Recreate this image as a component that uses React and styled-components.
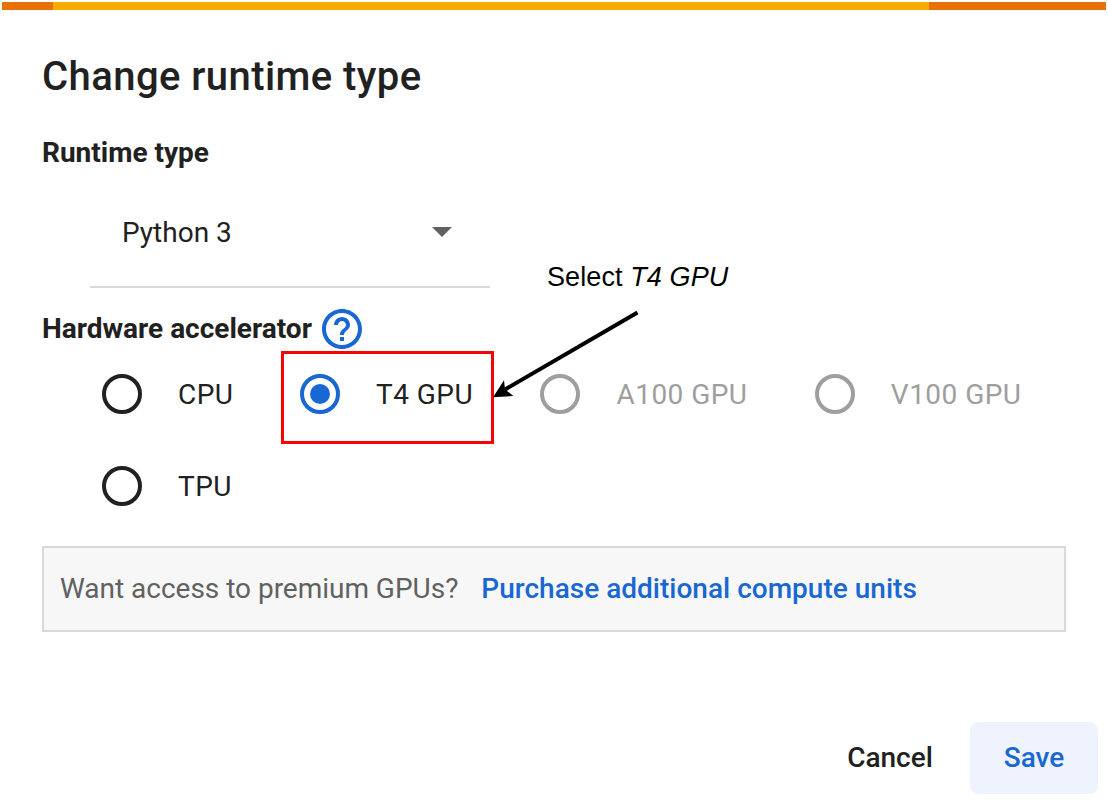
import React from "react";
import styled, { createGlobalStyle } from "styled-components";

const blue = "#1967d2";
const ink = "#212121";

const GlobalStyle = createGlobalStyle`
  * { box-sizing: border-box; }
  body { margin: 0; background: #fff; font-family: Roboto, sans-serif; color: ${ink}; }
`;

const Dialog = styled.main`
  position: relative;
  width: 1108px;
  height: 808px;
  padding: 2px 2px 0;
  display: flex;
  flex-direction: column;
  overflow: hidden;
`;

const ProgressBar = styled.div`
  height: 8px;
  flex: none;
  display: grid;
  grid-template-columns: 51px 875.5px 1fr;
  background: #e8710a;
`;

const ProgressFill = styled.div`
  grid-column: 2;
  background: #f9ab00;
`;

const Body = styled.div`
  padding: 43px 40px 0;
`;

const Title = styled.h1`
  margin: 0;
  font-size: 40px;
  line-height: 48px;
  font-weight: 500;
  letter-spacing: 0.43px;
`;

const FieldLabel = styled.h2`
  margin: 0;
  display: flex;
  align-items: center;
  gap: 10px;
  height: 40px;
  font-size: 28px;
  line-height: 40px;
  font-weight: 700;
`;

const RuntimeField = styled.section`
  margin-top: 32px;
`;

const Select = styled.div`
  margin: 5px 0 0 48px;
  width: 400px;
  height: 110px;
  padding: 0 38px 0 32px;
  border-bottom: 2px solid #dadada;
  display: flex;
  align-items: center;
  justify-content: space-between;
  font-size: 28px;
`;

const Accelerator = styled.section`
  margin-top: 21px;
`;

const Options = styled.div`
  display: flex;
  flex-wrap: wrap;
  column-gap: 67.4px;
  margin-left: 60px;
  margin-top: -1px;
`;

const Option = styled.div`
  position: relative;
  display: flex;
  align-items: center;
  gap: 36px;
  height: 92px;
  font-size: 28px;
  letter-spacing: 0.46px;
  color: ${(p) => (p.$disabled ? "#9e9e9e" : ink)};

  &:first-child {
    margin-right: -0.8px;
  }
`;

const Radio = styled.span`
  width: 40px;
  height: 40px;
  border-radius: 50%;
  border: 4px solid ${(p) => (p.$checked ? blue : "currentColor")};
  display: grid;
  place-items: center;
  &::after {
    content: "";
    width: 20px;
    height: 20px;
    border-radius: 50%;
    background: ${(p) => (p.$checked ? blue : "transparent")};
  }
`;

const Highlight = styled.span`
  position: absolute;
  left: -19px;
  top: 3px;
  width: 213px;
  height: 93px;
  border: 3px solid #f50505;
`;

const Banner = styled.section`
  margin-top: 14px;
  height: 86px;
  width: 1024px;
  border: 2px solid #d9d9d9;
  background: #f7f7f7;
  padding: 0 16px 2px;
  display: flex;
  align-items: center;
  gap: 23px;
  font-size: 28px;
  letter-spacing: -0.02px;
  color: #616161;
`;

const PurchaseLink = styled.a`
  color: ${blue};
  font-weight: 500;
  letter-spacing: 0.01px;
`;

const Actions = styled.footer`
  margin-top: 90px;
  padding-right: 8px;
  display: flex;
  justify-content: flex-end;
`;

const Button = styled.button`
  width: ${(p) => (p.$primary ? 128 : 160)}px;
  height: 72px;
  padding: 0;
  border: 0;
  border-radius: 8px;
  font: 500 28px/72px Roboto, sans-serif;
  color: ${(p) => (p.$primary ? blue : ink)};
  background: ${(p) => (p.$primary ? "#eef3fd" : "transparent")};
`;

const Note = styled.div`
  position: absolute;
  left: 547px;
  top: 261px;
  font: 27px/32px "Liberation Sans", sans-serif;
  letter-spacing: 0.1px;
  color: #000;
  white-space: nowrap;
`;

const Arrow = styled.svg`
  position: absolute;
  left: 490px;
  top: 305px;
`;

const accelerators = [
  { name: "CPU" },
  { name: "T4 GPU", checked: true },
  { name: "A100 GPU", disabled: true },
  { name: "V100 GPU", disabled: true },
  { name: "TPU" },
];

const HelpIcon = () => (
  <svg width="40" height="40" viewBox="2 2 20 20" fill={blue}>
    <path d="M11 18h2v-2h-2v2zm1-16C6.48 2 2 6.48 2 12s4.48 10 10 10 10-4.48 10-10S17.52 2 12 2zm0 18c-4.41 0-8-3.59-8-8s3.59-8 8-8 8 3.59 8 8-3.59 8-8 8zm0-14c-2.21 0-4 1.79-4 4h2c0-1.1.9-2 2-2s2 .9 2 2c0 2-3 1.75-3 5h2c0-2.25 3-2.5 3-5 0-2.21-1.79-4-4-4z" />
  </svg>
);

export default function App() {
  return (
    <>
      <GlobalStyle />
      <Dialog>
        <ProgressBar>
          <ProgressFill />
        </ProgressBar>
        <Body>
          <Title>Change runtime type</Title>
          <RuntimeField>
            <FieldLabel>Runtime type</FieldLabel>
            <Select>
              Python 3
              <svg width="20" height="10" viewBox="0 0 20 10" fill="#616161">
                <path d="M0 0h20L10 10z" />
              </svg>
            </Select>
          </RuntimeField>
          <Accelerator>
            <FieldLabel>
              Hardware accelerator
              <HelpIcon />
            </FieldLabel>
            <Options>
              {accelerators.map((a) => (
                <Option key={a.name} $disabled={a.disabled}>
                  <Radio $checked={a.checked} />
                  <span>{a.name}</span>
                  {a.checked && <Highlight />}
                </Option>
              ))}
            </Options>
          </Accelerator>
          <Banner>
            <span>Want access to premium GPUs?</span>
            <PurchaseLink>Purchase additional compute units</PurchaseLink>
          </Banner>
        </Body>
        <Actions>
          <Button>Cancel</Button>
          <Button $primary>Save</Button>
        </Actions>
        <Note>
          Select <em>T4 GPU</em>
        </Note>
        <Arrow width="152" height="100" viewBox="490 305 152 100">
          <path d="M637.5 312.5L505 389.5" stroke="#000" strokeWidth="4" fill="none" />
          <path d="M493 397.2L504 380.2L505 389.5L513.5 396z" fill="#000" />
        </Arrow>
      </Dialog>
    </>
  );
}
